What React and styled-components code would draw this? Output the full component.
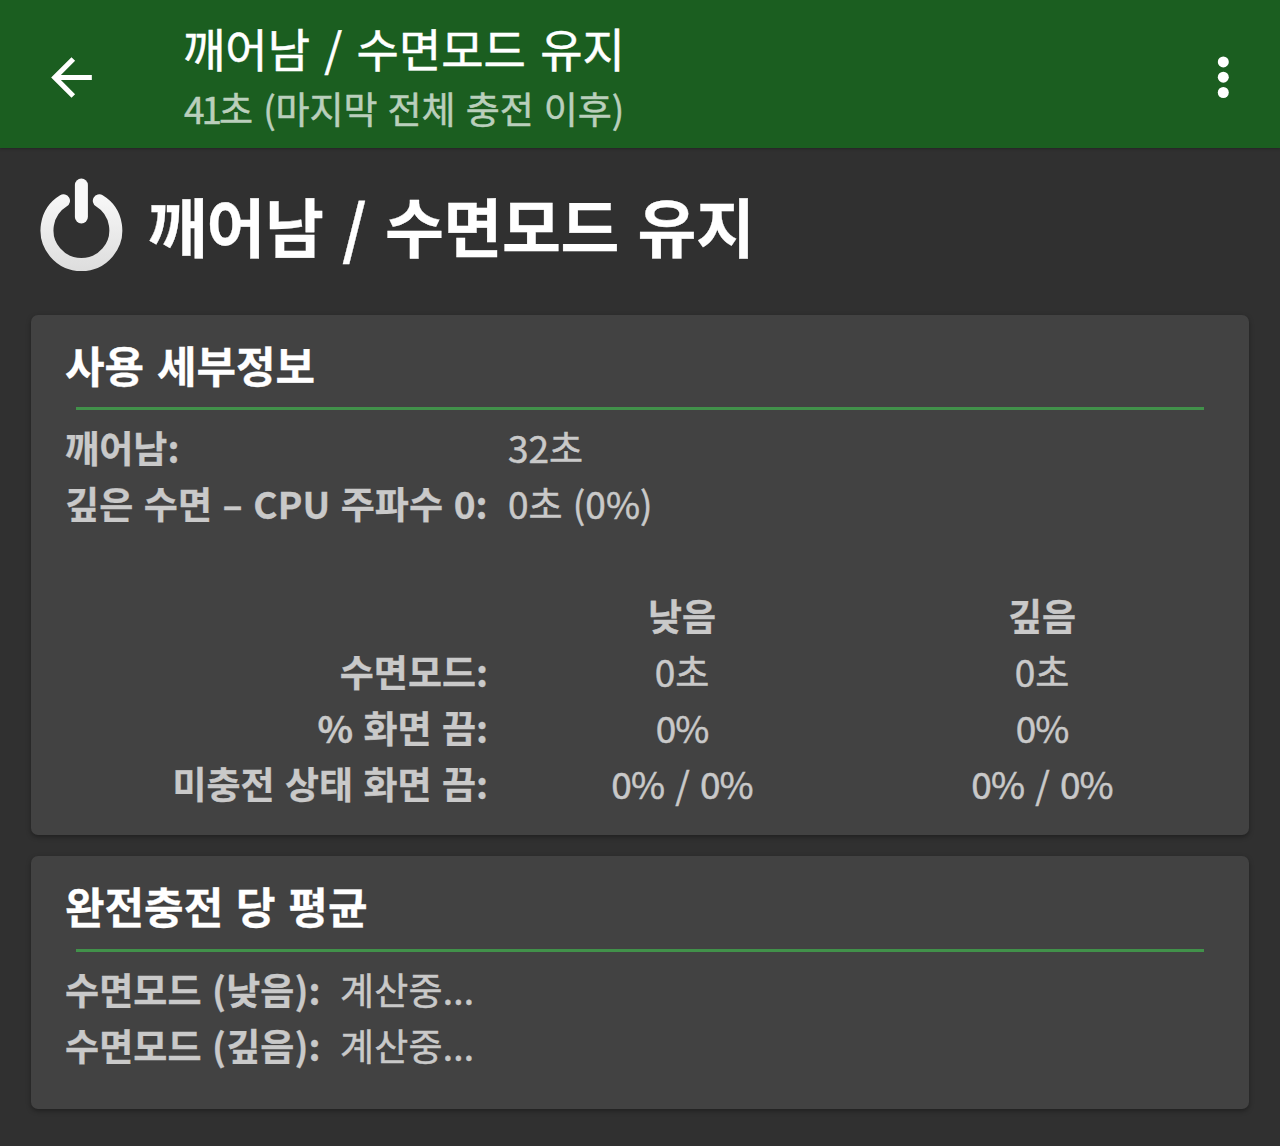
import styled, { createGlobalStyle } from 'styled-components'

const GlobalStyle = createGlobalStyle`
  * {
    box-sizing: border-box;
  }

  body {
    margin: 0;
    background-color: #303030;
    color: #c9c9c9;
    font-family: 'Noto Sans CJK KR', 'Noto Sans', sans-serif;
  }
`

const Page = styled.div`
  width: 1280px;
  height: 1146px;
  overflow: hidden;
`

const Toolbar = styled.header`
  display: flex;
  align-items: center;
  height: 148px;
  padding: 6px 26px 0 41px;
  background-color: #1b5e20;
  box-shadow: 0 1px 2px #262626;
`

const IconButton = styled.button`
  display: flex;
  padding: 0;
  border: 0;
  background: none;
  color: white;
`

const ToolbarTexts = styled.div`
  flex: 1;
  margin: 0 0 0 81px;
`

const Text = styled.div`
  font-size: ${props => props.$size}px;
  line-height: ${props => props.$line}px;
  font-weight: ${props => props.$bold ? 700 : 400};
  letter-spacing: ${props => props.$track || 0}px;
  word-spacing: ${props => props.$gap || 0}px;
  white-space: pre;
  -webkit-text-stroke: ${props => props.$bold ? 0.3 : 0.5}px currentColor;
`

const ToolbarTitle = styled(Text)`
  color: white;
`

const ToolbarSubtitle = styled(Text)`
  margin-left: 1px;
  color: #bacfbc;
`

const Digits = styled.span`
  letter-spacing: -3px;
`

const Heading = styled.div`
  display: flex;
  height: 167px;
  padding: 26px 36px 0;
`

const HeadingTitle = styled(Text).attrs({ as: 'h1' })`
  margin: 8px 0 0 20px;
  color: white;
`

const Card = styled.section`
  height: ${props => props.$height}px;
  margin: 0 31px 21px;
  padding: 17px 27px 0 34px;
  background-color: #424242;
  border-radius: 7px;
  box-shadow: 0 2px 5px rgba(0, 0, 0, 0.35);
`

const CardTitle = styled(Text).attrs({ as: 'h2' })`
  margin: 0;
  color: white;
`

const Divider = styled.div`
  height: 3px;
  margin: ${props => props.$top}px 18px 9px 11px;
  background-color: #41914a;
`

const Rows = styled.div`
  display: grid;
  grid-template-columns: ${props => props.$columns};
  grid-auto-rows: 56px;
  margin-top: ${props => props.$top || 0}px;
`

const Cell = styled(Text)`
  text-align: ${props => props.$align || 'left'};
`

const Item = ({ children, ...rest }) =>
  <Cell $size={37} $line={56} $gap={2} {...rest}>{children}</Cell>

const BackIcon = () =>
  <svg width='61' height='61' viewBox='0 0 24 24' fill='currentColor'>
    <path d='M20 11H7.83l5.59-5.59L12 4l-8 8 8 8 1.41-1.41L7.83 13H20v-2z' />
  </svg>

const MoreIcon = () =>
  <svg width='61' height='61' viewBox='0 0 61 61' fill='currentColor'>
    <circle cx='30.3' cy='14.9' r='5.5' />
    <circle cx='30.3' cy='30.2' r='5.5' />
    <circle cx='30.3' cy='45.5' r='5.5' />
  </svg>

const PowerIcon = () =>
  <svg width='92' height='100' viewBox='0 0 92 100' fill='none' strokeLinecap='round'>
    <defs>
      <linearGradient id='metal' gradientUnits='userSpaceOnUse' x1='0' y1='0' x2='0' y2='100'>
        <stop offset='0' stopColor='#ffffff' />
        <stop offset='1' stopColor='#dcdcdc' />
      </linearGradient>
    </defs>
    <path d='M27.5 26.8A34.4 34.4 0 1 0 63.3 26.8' stroke='url(#metal)' strokeWidth='13' />
    <path d='M45.4 11V43' stroke='#f8f8f8' strokeWidth='13' />
  </svg>

const usage = [
  ['깨어남:', '32초'],
  ['깊은 수면 – CPU 주파수 0:', '0초 (0%)']
]

const sleepModes = [
  ['', '낮음', '깊음'],
  ['수면모드:', '0초', '0초'],
  ['% 화면 끔:', '0%', '0%'],
  ['미충전 상태 화면 끔:', '0% / 0%', '0% / 0%']
]

const averages = [
  ['수면모드 (낮음):', '계산중...'],
  ['수면모드 (깊음):', '계산중...']
]

function App () {
  return (
    <Page>
      <GlobalStyle />
      <Toolbar>
        <IconButton aria-label='뒤로'><BackIcon /></IconButton>
        <ToolbarTexts>
          <ToolbarTitle $size={46} $line={62} $gap={4}>깨어남 / 수면모드 유지</ToolbarTitle>
          <ToolbarSubtitle $size={37} $line={61} $gap={2} $track={-0.1}>
            <Digits>41</Digits>초 (마지막 전체 충전 이후)
          </ToolbarSubtitle>
        </ToolbarTexts>
        <IconButton aria-label='더보기'><MoreIcon /></IconButton>
      </Toolbar>
      <Heading>
        <PowerIcon />
        <HeadingTitle $size={64} $line={84} $gap={4.5} $track={-0.4} $bold>깨어남 / 수면모드 유지</HeadingTitle>
      </Heading>
      <Card $height={520}>
        <CardTitle $size={43} $line={64} $gap={3} $bold>사용 세부정보</CardTitle>
        <Divider $top={11} />
        <Rows $columns='443px 1fr'>
          {usage.map(([label, value]) => [
            <Item key={label} $bold $track={0.1}>{label}</Item>,
            <Item key={value}>{value}</Item>
          ])}
        </Rows>
        <Rows $columns='423px 14px 360px 360px' $top={56}>
          {sleepModes.map(([label, low, deep], i) => [
            <Item key={'label' + i} $bold $align='right'>{label}</Item>,
            <span key={'space' + i} />,
            <Item key={'low' + i} $bold={i === 0} $track={i > 1 ? -1 : 0} $gap={4} $align='center'>{low}</Item>,
            <Item key={'deep' + i} $bold={i === 0} $track={i > 1 ? -1 : 0} $gap={4} $align='center'>{deep}</Item>
          ])}
        </Rows>
      </Card>
      <Card $height={253}>
        <CardTitle $size={43} $line={64} $gap={3} $bold>완전충전 당 평균</CardTitle>
        <Divider $top={12} />
        <Rows $columns='275px 1fr'>
          {averages.map(([label, value]) => [
            <Item key={label} $bold $track={0.1}>{label}</Item>,
            <Item key={label + value} $track={0.2}>{value}</Item>
          ])}
        </Rows>
      </Card>
    </Page>
  )
}

export default App
